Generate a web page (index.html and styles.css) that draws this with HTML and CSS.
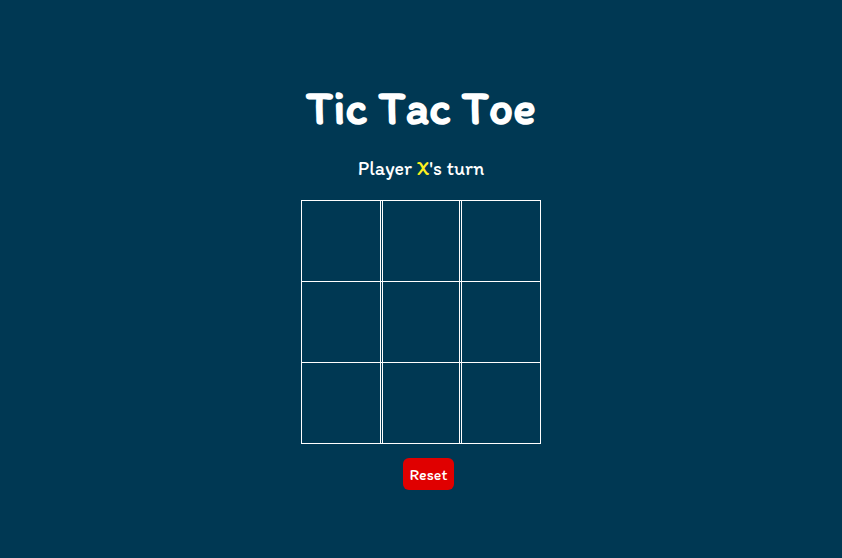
FILE: index.html
```html
<!DOCTYPE html>
<html lang="en">
<head>
<meta charset="utf-8">
<meta name="viewport" content="width=device-width, initial-scale=1">
<title>Tic Tac Toe</title>
<link rel="stylesheet" href="styles.css">
</head>
<body>
<main class="game">
  <h1 class="title">Tic Tac Toe</h1>
  <p class="status">Player <span class="player">X</span>'s turn</p>
  <div class="board">
    <div class="row">
      <button class="tile" type="button" aria-label="Row 1, column 1"></button>
      <button class="tile" type="button" aria-label="Row 1, column 2"></button>
      <button class="tile" type="button" aria-label="Row 1, column 3"></button>
    </div>
    <div class="row">
      <button class="tile" type="button" aria-label="Row 2, column 1"></button>
      <button class="tile" type="button" aria-label="Row 2, column 2"></button>
      <button class="tile" type="button" aria-label="Row 2, column 3"></button>
    </div>
    <div class="row">
      <button class="tile" type="button" aria-label="Row 3, column 1"></button>
      <button class="tile" type="button" aria-label="Row 3, column 2"></button>
      <button class="tile" type="button" aria-label="Row 3, column 3"></button>
    </div>
  </div>
  <button class="reset" type="button">Reset</button>
</main>
</body>
</html>
```
FILE: styles.css
```css
* {
  box-sizing: border-box;
}

body {
  margin: 0;
  min-height: 100vh;
  background: #003853;
  color: #fff;
  font-family: "Itim", Lato, sans-serif;
}

.game {
  display: flex;
  flex-direction: column;
  align-items: center;
  padding: 77px 16px 32px;
}

.title {
  margin: 0;
  font-size: 48px;
  line-height: 60px;
  font-weight: 700;
}

.status {
  margin: 17px 0 18px;
  font-size: 20px;
  line-height: 28px;
  font-weight: 400;
}

.player {
  color: #fff01f;
}

.board {
  border-top: 1px solid #fff;
}

.row {
  display: grid;
  grid-template-columns: 80px 78px 80px;
  grid-auto-rows: 80px;
  column-gap: 1px;
  border-bottom: 1px solid #fff;
}

.tile {
  padding: 0;
  border: solid #fff;
  border-width: 0 1px;
  background: none;
}

.reset {
  margin: 14px 0 0 15px;
  padding: 0 7px;
  height: 32px;
  border: 0;
  border-radius: 6px;
  background: #e00000;
  color: #fff;
  font: 400 16px "Itim", Lato, sans-serif;
}
```
